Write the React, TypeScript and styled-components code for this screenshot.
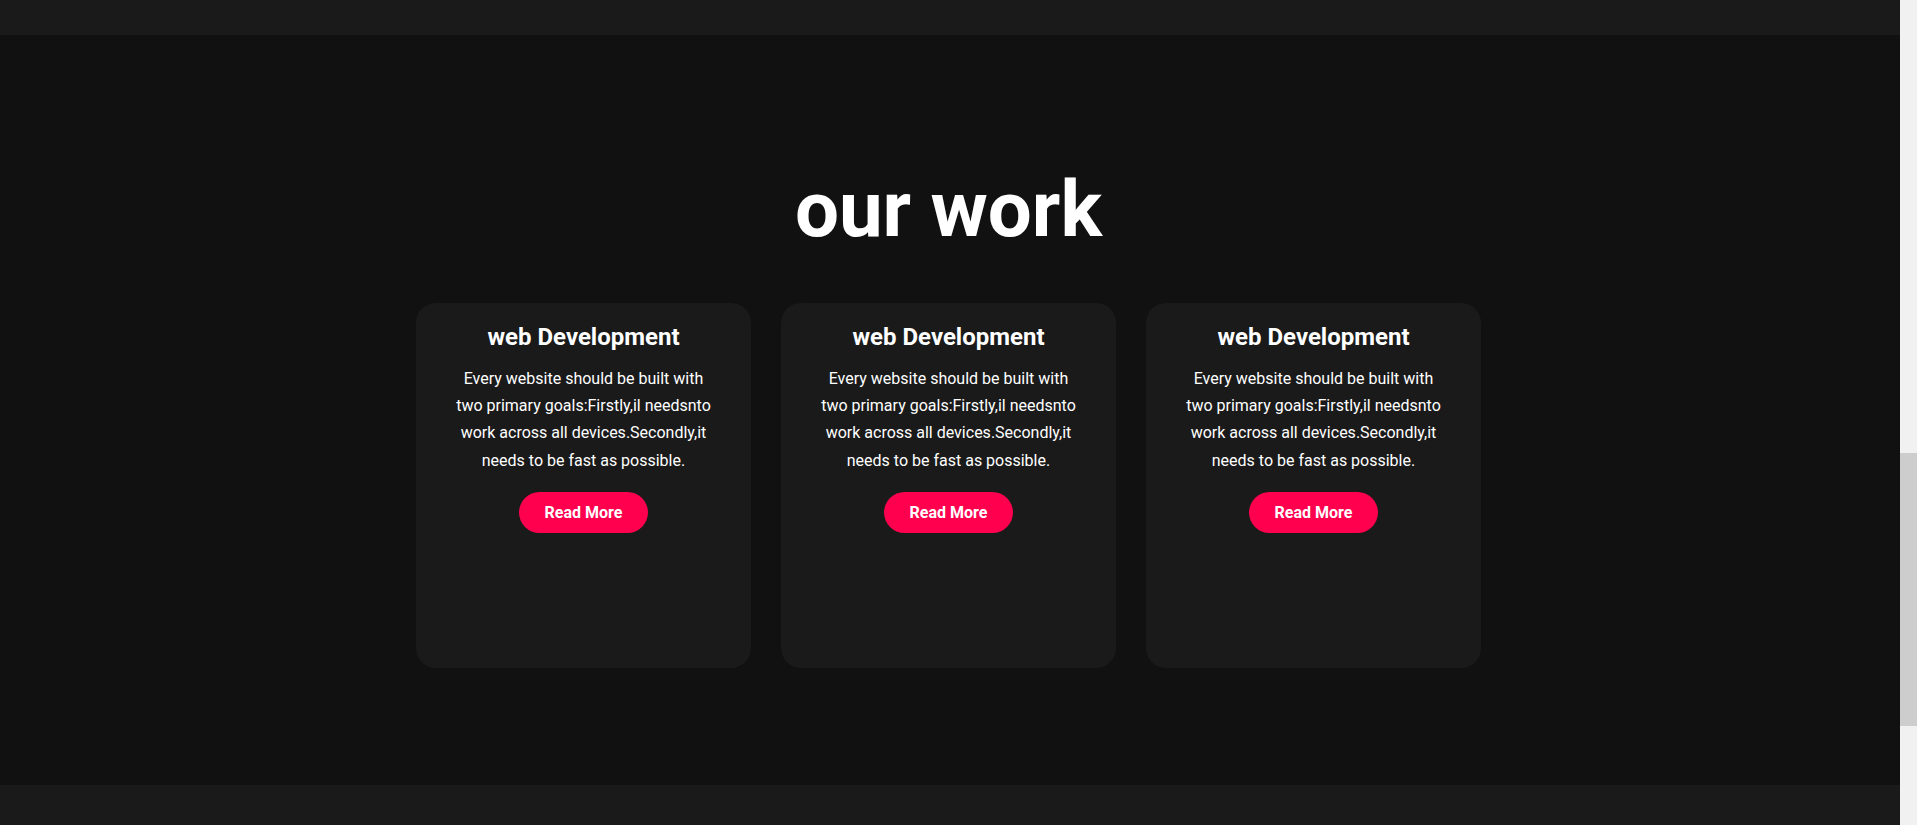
import React from "react";
import styled, { createGlobalStyle } from "styled-components";

const GlobalStyle = createGlobalStyle`
  * { box-sizing: border-box; }
  html, body { margin: 0; padding: 0; height: 100%; overflow: hidden; background: #111111; }
  body { font-family: Roboto, "Liberation Sans", Arial, sans-serif; color: #ffffff; }
`;

const Shell = styled.div`
  display: flex;
  width: 100vw;
  height: 825px;
`;

const Page = styled.div`
  flex: 1;
  display: flex;
  flex-direction: column;
  min-width: 0;
`;

const EdgeBar = styled.div<{ $h?: number }>`
  background: #1a1a1a;
  height: ${(p) => (p.$h ? `${p.$h}px` : "auto")};
  flex: ${(p) => (p.$h ? "0 0 auto" : "1")};
`;

const Section = styled.section`
  background: #111111;
  height: 750px;
  padding: 129px 3px 0 0;
  display: flex;
  flex-direction: column;
  align-items: center;
`;

const Heading = styled.h1`
  margin: 0 0 48px;
  font-size: 78px;
  font-weight: 700;
  line-height: normal;
  color: #ffffff;
`;

const CardGrid = styled.div`
  display: grid;
  grid-template-columns: repeat(3, 335px);
  gap: 30px;
`;

const Card = styled.div`
  height: 365px;
  background: #1a1a1a;
  border-radius: 20px;
  padding: 20px 36px;
  display: flex;
  flex-direction: column;
  align-items: center;
  text-align: center;
`;

const CardTitle = styled.h3`
  margin: 0 0 14px;
  font-size: 24px;
  font-weight: 700;
  line-height: normal;
  color: #ffffff;
`;

const CardText = styled.p`
  margin: 0 0 18px;
  font-size: 16px;
  line-height: 27.2px;
  color: #ffffff;
  width: 263px;
`;

const Button = styled.button`
  border: none;
  background: #ff004f;
  color: #ffffff;
  font-family: Roboto, "Liberation Sans", Arial, sans-serif;
  font-size: 16px;
  font-weight: 700;
  line-height: 19px;
  padding: 11px 26px;
  border-radius: 30px;
  cursor: pointer;
`;

const ScrollTrack = styled.div`
  width: 17px;
  flex: 0 0 17px;
  background: #f1f1f1;
  padding-top: 453px;
`;

const ScrollThumb = styled.div`
  height: 273px;
  background: #cdcdcd;
`;

const cards = [0, 1, 2];

export default function App() {
  return (
    <>
      <GlobalStyle />
      <Shell>
        <Page>
          <EdgeBar $h={35} />
          <Section>
            <Heading>our work</Heading>
            <CardGrid>
              {cards.map((i) => (
                <Card key={i}>
                  <CardTitle>web Development</CardTitle>
                  <CardText>
                    Every website should be built with two primary goals:Firstly,il needsnto work across all
                    devices.Secondly,it needs to be fast as possible.
                  </CardText>
                  <Button>Read More</Button>
                </Card>
              ))}
            </CardGrid>
          </Section>
          <EdgeBar />
        </Page>
        <ScrollTrack>
          <ScrollThumb />
        </ScrollTrack>
      </Shell>
    </>
  );
}
